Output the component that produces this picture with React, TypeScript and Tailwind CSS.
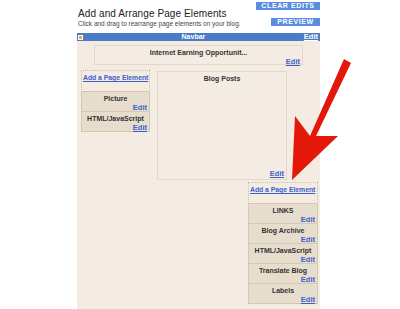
import React from 'react';

const font = { fontFamily: '"Liberation Sans", Arial, sans-serif' };

const EditLink = ({ className = '' }: { className?: string }) => (
  <div className={`text-right text-[7.5px] leading-[8px] font-bold text-[#3a5fcd] underline pr-[2px] ${className}`}>Edit</div>
);

const Widget = ({ title }: { title: string }) => (
  <div className="h-[21px] bg-[#e7ddcd] border border-[#d3c8b6] -mt-px flex flex-col pt-[3px]">
    <div className="text-center text-[7px] leading-[8px] font-bold text-[#333] whitespace-nowrap">{title}</div>
    <EditLink className="mt-[1px]" />
  </div>
);

const AddElement = () => (
  <div className="h-[22px] border border-dotted border-[#c9c0b4] pt-[2px] pl-[1px]">
    <div className="text-[6.8px] leading-[9px] font-bold text-[#3a5fcd] underline whitespace-nowrap">Add a Page Element</div>
  </div>
);

export default function App() {
  return (
    <div className="relative w-[400px] h-[309px] bg-white overflow-hidden" style={font}>
      <div className="ml-[77px] w-[243px] flex flex-col">
        <div className="h-[33px] flex">
          <div className="flex-1 min-w-0 pl-[1px] pt-[8px] whitespace-nowrap">
            <div className="text-[10px] leading-[11px] text-[#222] tracking-[0.1px]">Add and Arrange Page Elements</div>
            <div className="text-[6.5px] leading-[8px] text-[#444] mt-[1px]">Click and drag to rearrange page elements on your blog.</div>
          </div>
          <div className="shrink-0 flex flex-col items-end pt-[2px] gap-[8px]">
            <div className="w-[64px] h-[8px] bg-[#5a8de0] text-white text-[7px] leading-[8px] font-bold text-center tracking-[0.6px]">CLEAR EDITS</div>
            <div className="w-[49px] h-[8px] bg-[#5a8de0] text-white text-[7px] leading-[8px] font-bold text-center tracking-[0.6px]">PREVIEW</div>
          </div>
        </div>
        <div className="h-[8px] bg-[#4a7cc6] flex items-center">
          <div className="ml-[1px] w-[5px] h-[5px] bg-[#f7a33a] border border-white" />
          <div className="flex-1 text-center text-white text-[7px] leading-[8px] font-bold">Navbar</div>
          <div className="text-white text-[7.5px] leading-[8px] font-bold underline pr-[2px]">Edit</div>
        </div>
        <div className="h-[268px] bg-[#f4ece3] flex flex-col">
          <div className="ml-[17px] mt-[4px] w-[209px] h-[20px] border border-[#e2d9cc] pt-[3px]">
            <div className="text-center text-[7px] leading-[8px] font-bold text-[#333]">Internet Earning Opportunit...</div>
            <EditLink className="mt-[1px] pr-[1px]" />
          </div>
          <div className="flex mt-[5px]">
            <div className="ml-[4px] w-[69px] flex flex-col">
              <AddElement />
              <Widget title="Picture" />
              <Widget title="HTML/JavaScript" />
            </div>
            <div className="ml-[7px] mt-[1px] w-[130px] h-[109px] border border-[#e2d9cc] flex flex-col justify-between pt-[3px] pb-[1px]">
              <div className="text-center text-[7px] leading-[8px] font-bold text-[#333]">Blog Posts</div>
              <EditLink className="pr-[1px]" />
            </div>
          </div>
          <div className="ml-[171px] mt-[2px] w-[70px] flex flex-col">
            <AddElement />
            <Widget title="LINKS" />
            <Widget title="Blog Archive" />
            <Widget title="HTML/JavaScript" />
            <Widget title="Translate Blog" />
            <Widget title="Labels" />
          </div>
        </div>
      </div>
      <svg className="absolute left-0 top-0" width="400" height="309" viewBox="0 0 400 309">
        <polygon points="292,180 295,116 310,136 344,59 351,63 316,136 338,136" fill="#e3170a" />
      </svg>
    </div>
  );
}
